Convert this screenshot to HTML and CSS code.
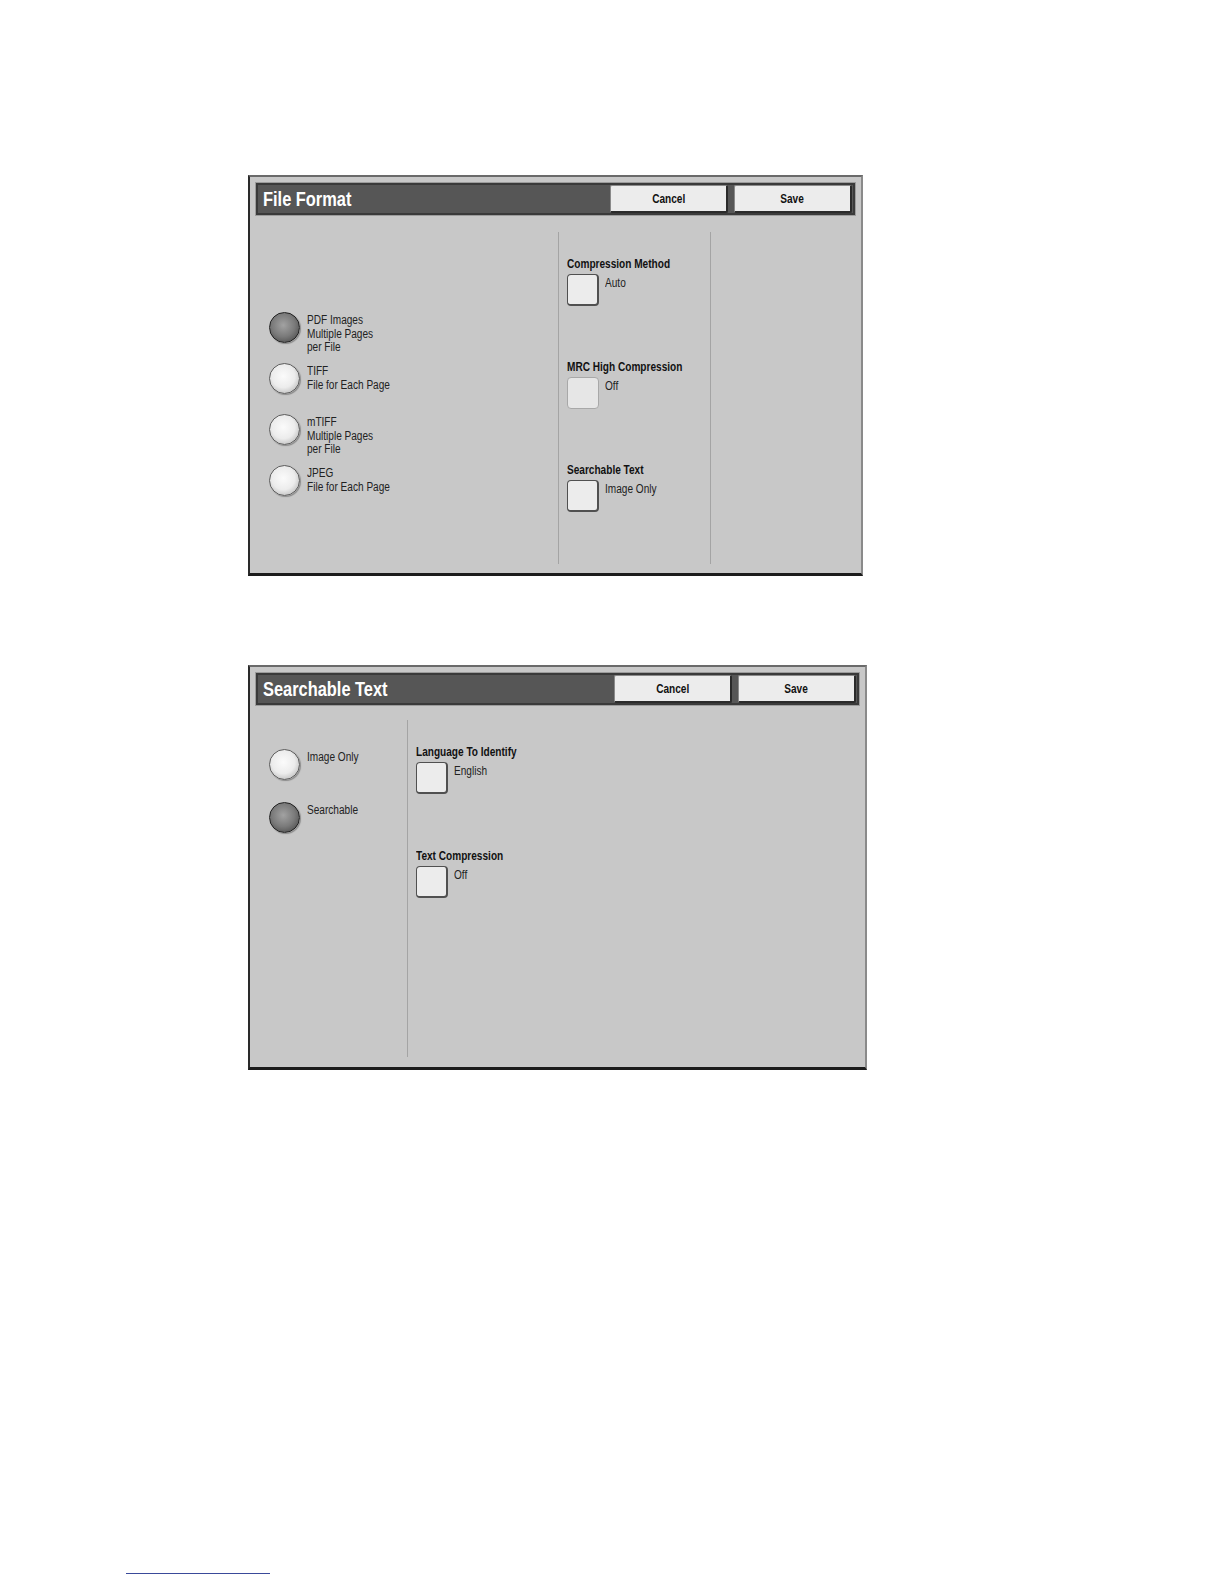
FILE: index.html
```html
<!DOCTYPE html>
<html lang="en">
<head>
    <meta charset="UTF-8">
    <title>Scan Options</title>
    <link rel="stylesheet" href="styles.css">
</head>
<body>
    <div class="page">
        <div class="panel panel-format">
            <div class="titlebar">
                <h1><span class="cond">File Format</span></h1>
                <div class="actions">
                    <button class="btn"><span class="cond">Cancel</span></button>
                    <button class="btn"><span class="cond">Save</span></button>
                </div>
            </div>
            <div class="panel-body">
                <div class="col col-radios">
                    <div class="radio-list">
                        <div class="radio-item">
                            <span class="radio on"></span>
                            <span class="radio-label cond">PDF Images<br>Multiple Pages<br>per File</span>
                        </div>
                        <div class="radio-item">
                            <span class="radio"></span>
                            <span class="radio-label cond">TIFF<br>File for Each Page</span>
                        </div>
                        <div class="radio-item">
                            <span class="radio"></span>
                            <span class="radio-label cond">mTIFF<br>Multiple Pages<br>per File</span>
                        </div>
                        <div class="radio-item">
                            <span class="radio"></span>
                            <span class="radio-label cond">JPEG<br>File for Each Page</span>
                        </div>
                    </div>
                </div>
                <div class="col col-options">
                    <div class="option">
                        <div class="option-title"><span class="cond">Compression Method</span></div>
                        <div class="option-row">
                            <span class="sq-btn"></span>
                            <span class="option-value cond">Auto</span>
                        </div>
                    </div>
                    <div class="option">
                        <div class="option-title"><span class="cond">MRC High Compression</span></div>
                        <div class="option-row">
                            <span class="sq-btn disabled"></span>
                            <span class="option-value cond">Off</span>
                        </div>
                    </div>
                    <div class="option">
                        <div class="option-title"><span class="cond">Searchable Text</span></div>
                        <div class="option-row">
                            <span class="sq-btn"></span>
                            <span class="option-value cond">Image Only</span>
                        </div>
                    </div>
                </div>
                <div class="col col-empty"></div>
            </div>
        </div>

        <div class="panel panel-search">
            <div class="titlebar">
                <h1><span class="cond">Searchable Text</span></h1>
                <div class="actions">
                    <button class="btn"><span class="cond">Cancel</span></button>
                    <button class="btn"><span class="cond">Save</span></button>
                </div>
            </div>
            <div class="panel-body">
                <div class="col col-radios">
                    <div class="radio-list">
                        <div class="radio-item">
                            <span class="radio"></span>
                            <span class="radio-label cond">Image Only</span>
                        </div>
                        <div class="radio-item">
                            <span class="radio on"></span>
                            <span class="radio-label cond">Searchable</span>
                        </div>
                    </div>
                </div>
                <div class="col col-options">
                    <div class="option">
                        <div class="option-title"><span class="cond">Language To Identify</span></div>
                        <div class="option-row">
                            <span class="sq-btn"></span>
                            <span class="option-value cond">English</span>
                        </div>
                    </div>
                    <div class="option">
                        <div class="option-title"><span class="cond">Text Compression</span></div>
                        <div class="option-row">
                            <span class="sq-btn"></span>
                            <span class="option-value cond">Off</span>
                        </div>
                    </div>
                </div>
            </div>
        </div>

        <div class="footnote-rule"></div>
    </div>
</body>
</html>
```

FILE: styles.css
```css
body {
    margin: 0;
    background-color: #ffffff;
    font-family: "Liberation Sans", Arial, sans-serif;
    color: #1e1e1e;
}
.page {
    padding-top: 175px;
}
/* the panel font is a narrow grotesque; squeeze Liberation Sans to match */
.cond {
    display: inline-block;
    transform: scaleX(0.84);
    transform-origin: 0 0;
    white-space: nowrap;
}
.panel {
    margin-left: 248px;
    background-color: #c8c8c8;
    border: 2px solid #2a2a2a;
    border-top-color: #6a6a6a;
    border-right-color: #8a8a8a;
    border-bottom-width: 3px;
    border-bottom-color: #1c1c1c;
    padding: 6px 6px 0 6px;
}
.panel-format {
    width: 599px;
}
.panel-search {
    width: 603px;
    margin-top: 89px;
}
.titlebar {
    box-sizing: border-box;
    height: 32px;
    background-color: #565656;
    border: 2px solid #3a3a3a;
    box-shadow: 0 0 0 1px #9c9c9c;
    display: flex;
    align-items: center;
    justify-content: space-between;
}
.titlebar h1 {
    margin: 0;
    padding-left: 5px;
    color: #ffffff;
    font-size: 20px;
    line-height: 22px;
    font-weight: bold;
}
.titlebar h1 .cond {
    transform: scaleX(0.82);
}
.actions {
    display: flex;
    gap: 6px;
    padding-right: 1px;
}
.btn {
    width: 118px;
    height: 28px;
    background-color: #ececec;
    border: 1px solid #8a8a8a;
    border-right: 2px solid #2a2a2a;
    border-bottom: 2px solid #2a2a2a;
    border-radius: 2px;
    font-family: inherit;
    font-size: 12px;
    font-weight: bold;
    color: #111;
    padding: 0;
}
.btn .cond {
    transform-origin: 50% 0;
}
.panel-body {
    display: flex;
}
.panel-format .panel-body {
    height: 358px;
}
.panel-search .panel-body {
    height: 362px;
}
.col {
    box-sizing: border-box;
}
.panel-format .col {
    margin-top: 17px;
    height: 332px;
}
.panel-search .col {
    margin-top: 15px;
    height: 337px;
}
.col-options,
.col-empty {
    border-left: 1px solid #a4a4a4;
    padding: 25px 0 0 8px;
}
.panel-format .col-radios {
    width: 302px;
    padding-top: 80px;
}
.panel-format .col-options {
    width: 152px;
}
.col-empty {
    flex: 1;
}
.panel-search .col-radios {
    width: 151px;
    padding-top: 29px;
}
.panel-search .col-options {
    flex: 1;
}
.radio-list {
    padding-left: 13px;
}
.radio-item {
    display: flex;
    align-items: flex-start;
    height: 51px;
}
.panel-search .radio-item {
    height: 53px;
}
.radio {
    flex: none;
    width: 29px;
    height: 29px;
    border-radius: 50%;
    border: 1px solid #5e5e5e;
    background: radial-gradient(circle at 46% 42%, #fbfbfb 0%, #ececec 50%, #c4c4c4 78%, #8c8c8c 100%);
    box-shadow: 1px 1px 1px #8a8a8a;
}
.radio.on {
    border-color: #222;
    background: radial-gradient(circle at 46% 42%, #a2a2a2 0%, #7a7a7a 50%, #555 80%, #333 100%);
}
.radio-label {
    margin-left: 7px;
    padding-top: 2px;
    font-size: 12px;
    line-height: 13.7px;
    color: #222;
}
.option {
    height: 103px;
}
.panel-search .option {
    height: 104px;
}
.option-title {
    font-size: 12px;
    font-weight: bold;
    line-height: 15px;
    margin-bottom: 2px;
    color: #111;
}
.option-row {
    display: flex;
    align-items: flex-start;
}
.sq-btn {
    flex: none;
    box-sizing: border-box;
    width: 32px;
    height: 32px;
    background-color: #ececec;
    border: 1px solid #505050;
    border-bottom-width: 2px;
    border-right-width: 2px;
    border-radius: 4px;
}
.sq-btn.disabled {
    border: 1px solid #a8a8a8;
    background-color: #e6e6e6;
}
.option-value {
    margin-left: 6px;
    padding-top: 2px;
    font-size: 12px;
    line-height: 14px;
    color: #222;
}
.footnote-rule {
    margin: 503px 0 0 126px;
    width: 144px;
    height: 1px;
    background-color: #3a4a9a;
}
```
